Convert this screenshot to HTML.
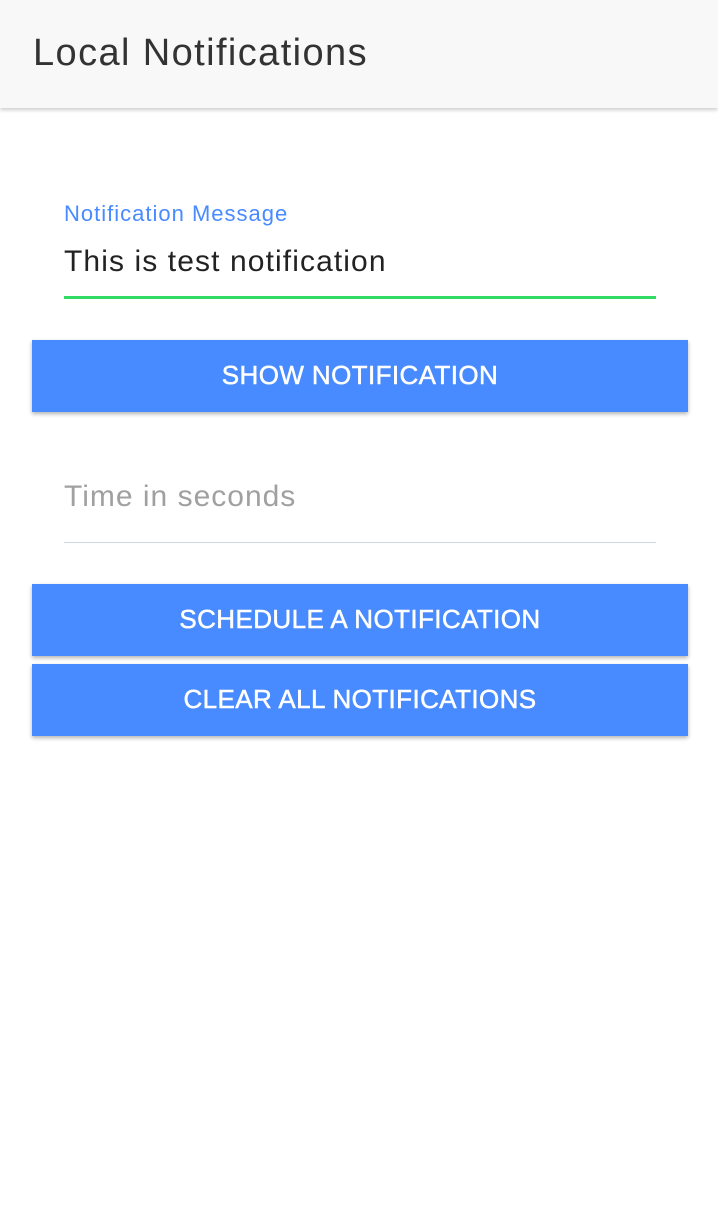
<!DOCTYPE html>
<html><head><style>
body{margin:0;width:718px;height:1228px;background:#fff;font-family:"Liberation Sans",sans-serif;position:relative;overflow:hidden}
.hdr{position:absolute;left:0;top:0;width:718px;height:108px;background:#f8f8f8;box-shadow:0 2px 4px rgba(0,0,0,.2)}
.hdr div{position:absolute;left:33px;top:32px;font-size:38px;color:#333;letter-spacing:1.4px}
.lbl{position:absolute;left:64px;top:201px;font-size:22px;color:#488aff;letter-spacing:1px}
.val{position:absolute;left:64px;top:245px;font-size:30px;color:#222;letter-spacing:1.1px}
.line{position:absolute;left:64px;width:592px}
.btn{position:absolute;left:32px;width:656px;height:72px;background:#488aff;color:#fff;font-size:26px;text-align:center;line-height:70px;box-shadow:0 2px 4px rgba(0,0,0,.3);letter-spacing:.4px;-webkit-text-stroke:0.5px #fff}
.ph{position:absolute;left:64px;top:480px;font-size:30px;color:#a0a0a0;letter-spacing:1px}
</style></head><body>
<div class="hdr"><div>Local Notifications</div></div>
<div class="lbl">Notification Message</div>
<div class="val">This is test notification</div>
<div class="line" style="top:296px;height:3px;background:#32db64"></div>
<div class="btn" style="top:340px">SHOW NOTIFICATION</div>
<div class="ph">Time in seconds</div>
<div class="line" style="top:542px;height:1px;background:#d0d4e0"></div>
<div class="btn" style="top:584px">SCHEDULE A NOTIFICATION</div>
<div class="btn" style="top:664px">CLEAR ALL NOTIFICATIONS</div>
</body></html>
